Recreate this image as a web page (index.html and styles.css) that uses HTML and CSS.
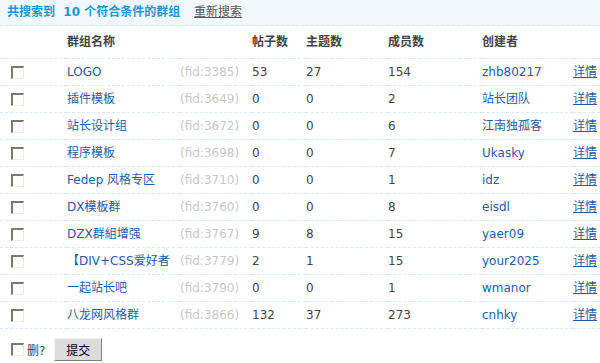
FILE: index.html
```html
<!DOCTYPE html>
<html>
<head>
<meta charset="utf-8">
<title>群组搜索</title>
<link rel="stylesheet" href="styles.css">
</head>
<body>
<div class="searchbar">
  <strong>共搜索到 &nbsp;10 个符合条件的群组</strong>
  <a href="#" class="research">重新搜索</a>
</div>
<form action="#" method="get">
<table class="grouplist">
  <colgroup>
    <col class="c-chk"><col class="c-name"><col class="c-fid"><col class="c-posts">
    <col class="c-threads"><col class="c-members"><col class="c-founder"><col class="c-more">
  </colgroup>
  <thead>
    <tr>
      <th></th>
      <th colspan="2">群组名称</th>
      <th>帖子数</th>
      <th>主题数</th>
      <th>成员数</th>
      <th>创建者</th>
      <th></th>
    </tr>
  </thead>
  <tbody>
    <tr><td><input type="checkbox" class="chk"></td><td><a href="#">LOGO</a></td><td class="fid">(fid:3385)</td><td>53</td><td>27</td><td>154</td><td><a href="#">zhb80217</a></td><td><a href="#" class="more">详情</a></td></tr>
    <tr><td><input type="checkbox" class="chk"></td><td><a href="#">插件模板</a></td><td class="fid">(fid:3649)</td><td>0</td><td>0</td><td>2</td><td><a href="#">站长团队</a></td><td><a href="#" class="more">详情</a></td></tr>
    <tr><td><input type="checkbox" class="chk"></td><td><a href="#">站长设计组</a></td><td class="fid">(fid:3672)</td><td>0</td><td>0</td><td>6</td><td><a href="#">江南独孤客</a></td><td><a href="#" class="more">详情</a></td></tr>
    <tr><td><input type="checkbox" class="chk"></td><td><a href="#">程序模板</a></td><td class="fid">(fid:3698)</td><td>0</td><td>0</td><td>7</td><td><a href="#">Ukasky</a></td><td><a href="#" class="more">详情</a></td></tr>
    <tr><td><input type="checkbox" class="chk"></td><td><a href="#">Fedep 风格专区</a></td><td class="fid">(fid:3710)</td><td>0</td><td>0</td><td>1</td><td><a href="#">idz</a></td><td><a href="#" class="more">详情</a></td></tr>
    <tr><td><input type="checkbox" class="chk"></td><td><a href="#">DX模板群</a></td><td class="fid">(fid:3760)</td><td>0</td><td>0</td><td>8</td><td><a href="#">eisdl</a></td><td><a href="#" class="more">详情</a></td></tr>
    <tr><td><input type="checkbox" class="chk"></td><td><a href="#">DZX群組增强</a></td><td class="fid">(fid:3767)</td><td>9</td><td>8</td><td>15</td><td><a href="#">yaer09</a></td><td><a href="#" class="more">详情</a></td></tr>
    <tr><td><input type="checkbox" class="chk"></td><td><a href="#">【DIV+CSS爱好者</a></td><td class="fid">(fid:3779)</td><td>2</td><td>1</td><td>15</td><td><a href="#">your2025</a></td><td><a href="#" class="more">详情</a></td></tr>
    <tr><td><input type="checkbox" class="chk"></td><td><a href="#">一起站长吧</a></td><td class="fid">(fid:3790)</td><td>0</td><td>0</td><td>1</td><td><a href="#">wmanor</a></td><td><a href="#" class="more">详情</a></td></tr>
    <tr><td><input type="checkbox" class="chk"></td><td><a href="#">八龙网风格群</a></td><td class="fid">(fid:3866)</td><td>132</td><td>37</td><td>273</td><td><a href="#">cnhky</a></td><td><a href="#" class="more">详情</a></td></tr>
  </tbody>
</table>
<div class="controls">
  <input type="checkbox" class="chk" id="delall"><label for="delall">删?</label>
  <button type="button" class="btn">提交</button>
</div>
</form>
</body>
</html>
```
FILE: styles.css
```css
body
{
margin: 0;
font-family: "DejaVu Sans", Verdana, "Noto Sans CJK SC", sans-serif;
font-size: 12px;
color: #444;
background: #fff;
}

a
{
color: #1f5ca6;
text-decoration: none;
}

.searchbar
{
height: 25px;
line-height: 25px;
padding-left: 7px;
background: #f0f7fd;
border-bottom: 1px dashed #d6e8f7;
}

.searchbar strong
{
color: #1a97d3;
}

.searchbar .research
{
color: #555;
text-decoration: underline;
margin-left: 10px;
}

.grouplist
{
width: 600px;
border-collapse: collapse;
table-layout: fixed;
}

.c-chk { width: 67px; }
.c-name { width: 113px; }
.c-fid { width: 72px; }
.c-posts { width: 54px; }
.c-threads { width: 82px; }
.c-members { width: 94px; }
.c-founder { width: 91px; }
.c-more { width: 27px; }

.grouplist th,
.grouplist td
{
padding: 0;
text-align: left;
vertical-align: middle;
line-height: 16px;
white-space: nowrap;
overflow: hidden;
border-bottom: 1px dashed #d6e8f7;
}

.grouplist th
{
height: 32px;
font-weight: bold;
}

.grouplist td
{
height: 26px;
}

.grouplist .fid
{
color: #c8c8c8;
}

.grouplist .more
{
text-decoration: underline;
}

.chk
{
-webkit-appearance: none;
appearance: none;
display: inline-block;
vertical-align: middle;
width: 13px;
height: 13px;
margin: 0 0 0 11px;
background: #fff;
border-top: 2px solid #7b7a72;
border-left: 2px solid #7b7a72;
border-right: 1px solid #ecebdf;
border-bottom: 1px solid #ecebdf;
box-sizing: border-box;
}

.controls
{
display: flex;
align-items: center;
height: 23px;
margin-top: 9px;
}

.controls label
{
margin-left: 3px;
}

.btn
{
margin-left: 9px;
width: 48px;
height: 23px;
padding: 0;
font-family: "DejaVu Sans", "Noto Sans CJK SC", sans-serif;
font-size: 12px;
color: #000;
background: #dcdcdc;
border-top: 1px solid #f4f4f4;
border-left: 1px solid #f4f4f4;
border-right: 1px solid #7f7f7f;
border-bottom: 1px solid #7f7f7f;
}
```
